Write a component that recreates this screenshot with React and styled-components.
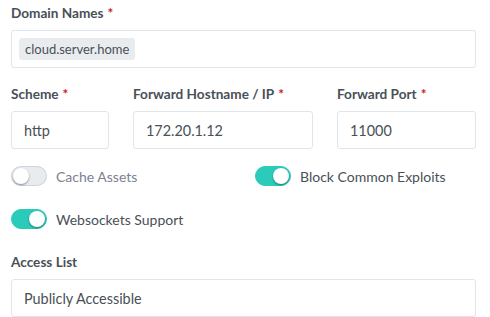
import React from 'react';
import styled, { createGlobalStyle } from 'styled-components';

const GlobalStyle = createGlobalStyle`
  html, body {
    margin: 0;
    padding: 0;
    background: #ffffff;
  }
  body {
    font-family: Lato, "Liberation Sans", sans-serif;
    color: #495057;
  }
`;

const Form = styled.div`
  width: 465px;
  padding: 3px 0 0 11px;
`;

const Group = styled.div`
  margin-bottom: ${(p) => p.mb || 16}px;
`;

const Label = styled.div`
  font-size: 13.6px;
  font-weight: 700;
  line-height: 21px;
  color: #495057;
  margin-bottom: 6px;
`;

const Required = styled.span`
  color: #cd201f;
  margin-left: 4px;
`;

const Input = styled.div`
  box-sizing: border-box;
  height: 38px;
  border: 1px solid #e0e5ec;
  border-radius: 3px;
  background: #fff;
  display: flex;
  align-items: center;
  padding: 0 ${(p) => (p.tags ? 7 : 12)}px;
  font-size: 14.4px;
  color: #495057;
`;

const Tag = styled.span`
  background: #e9ecef;
  border-radius: 3px;
  padding: 0 6px;
  height: 22px;
  line-height: 22px;
  font-size: 13px;
  color: #495057;
`;

const Columns = styled.div`
  display: grid;
  grid-template-columns: 98px 180px 139px;
  column-gap: 24px;
`;

const SwitchGrid = styled.div`
  display: grid;
  grid-template-columns: 220px 221px;
  column-gap: 24px;
  row-gap: 21px;
  margin-bottom: 22px;
`;

const Switch = styled.label`
  display: flex;
  align-items: center;
  height: 22px;
  gap: 9px;
  font-size: 14px;
  color: ${(p) => (p.on ? '#495057' : '#7a8290')};
`;

const Track = styled.span`
  position: relative;
  box-sizing: border-box;
  width: 36px;
  height: 20px;
  border-radius: 50px;
  background: ${(p) => (p.on ? '#2bcbba' : '#e9ecef')};
  border: 1px solid ${(p) => (p.on ? '#2bcbba' : 'rgba(0, 40, 100, 0.12)')};
  flex-shrink: 0;

  &::before {
    content: '';
    position: absolute;
    top: 1px;
    left: ${(p) => (p.on ? '17px' : '1px')};
    width: 16px;
    height: 16px;
    border-radius: 50%;
    background: #fff;
    box-shadow: 0 1px 2px 0 rgba(0, 0, 0, 0.4);
  }
`;

const Toggle = ({ on, children }) => (
  <Switch on={on ? 1 : 0}>
    <Track on={on ? 1 : 0} />
    {children}
  </Switch>
);

export default function App() {
  return (
    <>
      <GlobalStyle />
      <Form>
        <Group>
          <Label>
            Domain Names<Required>*</Required>
          </Label>
          <Input tags>
            <Tag>cloud.server.home</Tag>
          </Input>
        </Group>

        <Group>
          <Columns>
            <div>
              <Label>
                Scheme<Required>*</Required>
              </Label>
              <Input>http</Input>
            </div>
            <div>
              <Label>
                Forward Hostname / IP<Required>*</Required>
              </Label>
              <Input>172.20.1.12</Input>
            </div>
            <div>
              <Label>
                Forward Port<Required>*</Required>
              </Label>
              <Input>11000</Input>
            </div>
          </Columns>
        </Group>

        <SwitchGrid>
          <Toggle>Cache Assets</Toggle>
          <Toggle on>Block Common Exploits</Toggle>
          <Toggle on>Websockets Support</Toggle>
        </SwitchGrid>

        <Group>
          <Label>Access List</Label>
          <Input>Publicly Accessible</Input>
        </Group>
      </Form>
    </>
  );
}
